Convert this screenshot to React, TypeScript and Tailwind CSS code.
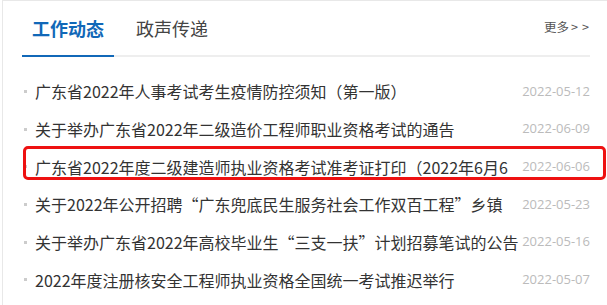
import React, { useState } from 'react';

// News list panel with two tabs and a highlighted row

const news = [
  { title: '广东省2022年人事考试考生疫情防控须知（第一版）', date: '2022-05-12' },
  { title: '关于举办广东省2022年二级造价工程师职业资格考试的通告', date: '2022-06-09' },
  { title: '广东省2022年度二级建造师执业资格考试准考证打印（2022年6月6', date: '2022-06-06' },
  { title: '关于2022年公开招聘“广东兜底民生服务社会工作双百工程”乡镇', date: '2022-05-23' },
  { title: '关于举办广东省2022年高校毕业生“三支一扶”计划招募笔试的公告', date: '2022-05-16' },
  { title: '2022年度注册核安全工程师执业资格全国统一考试推迟举行', date: '2022-05-07' },
];

const tabs = ['工作动态', '政声传递'];

export default function App() {
  const [active, setActive] = useState(0);

  return (
    <div
      className="relative w-[607px] h-[305px] overflow-hidden bg-white [text-spacing-trim:space-all]"
      style={{ fontFamily: '"Noto Sans CJK SC", "Noto Sans", sans-serif' }}
    >
      <div className="ml-[2px] h-full border-t border-l border-[#e8e8e8] pl-[19px] pr-[17px]">
        {/* tab header */}
        <div className="flex items-end h-[56px] border-b-2 border-[#eeeeee]">
          {tabs.map((tab, idx) => (
            <button
              key={tab}
              onClick={() => setActive(idx)}
              className={`-mb-[2px] h-[56px] flex items-center border-b-2 text-[18px] leading-none ${
                idx === 0 ? 'px-[10px] mr-[12px]' : 'px-[10px]'
              } ${
                active === idx
                  ? 'border-[#1168b8] text-[#1168b8] font-bold'
                  : 'border-transparent text-[#444444]'
              }`}
            >
              {tab}
            </button>
          ))}
          <a href="#" className="ml-auto h-[56px] flex items-center text-[12.5px] text-[#555555]">
            更多<span className="ml-[2px] tracking-[4px] -mr-[3px]">&gt;&gt;</span>
          </a>
        </div>

        {/* news rows */}
        <ul className="pt-[15.5px]">
          {news.map((item, idx) => (
            <li key={idx} className="flex items-center h-[37.7px]">
              <span className="w-[3px] h-[3px] bg-[#cccccc] ml-[2px] mr-[8px] shrink-0"></span>
              <a href="#" className="flex-1 min-w-0 overflow-hidden whitespace-nowrap text-[16px] text-[#333333]">
                {item.title}
              </a>
              <span
                className="ml-[3px] shrink-0 text-[13px] text-[#bbbbbb]"
                style={{ fontFamily: '"Open Sans", sans-serif' }}
              >
                {item.date}
              </span>
            </li>
          ))}
        </ul>
      </div>

      {/* highlight box drawn over the third row */}
      <div className="absolute left-[23px] top-[146px] w-[583px] h-[34px] border-[3px] border-[#ee1111] rounded-[5px] pointer-events-none"></div>
    </div>
  );
}
